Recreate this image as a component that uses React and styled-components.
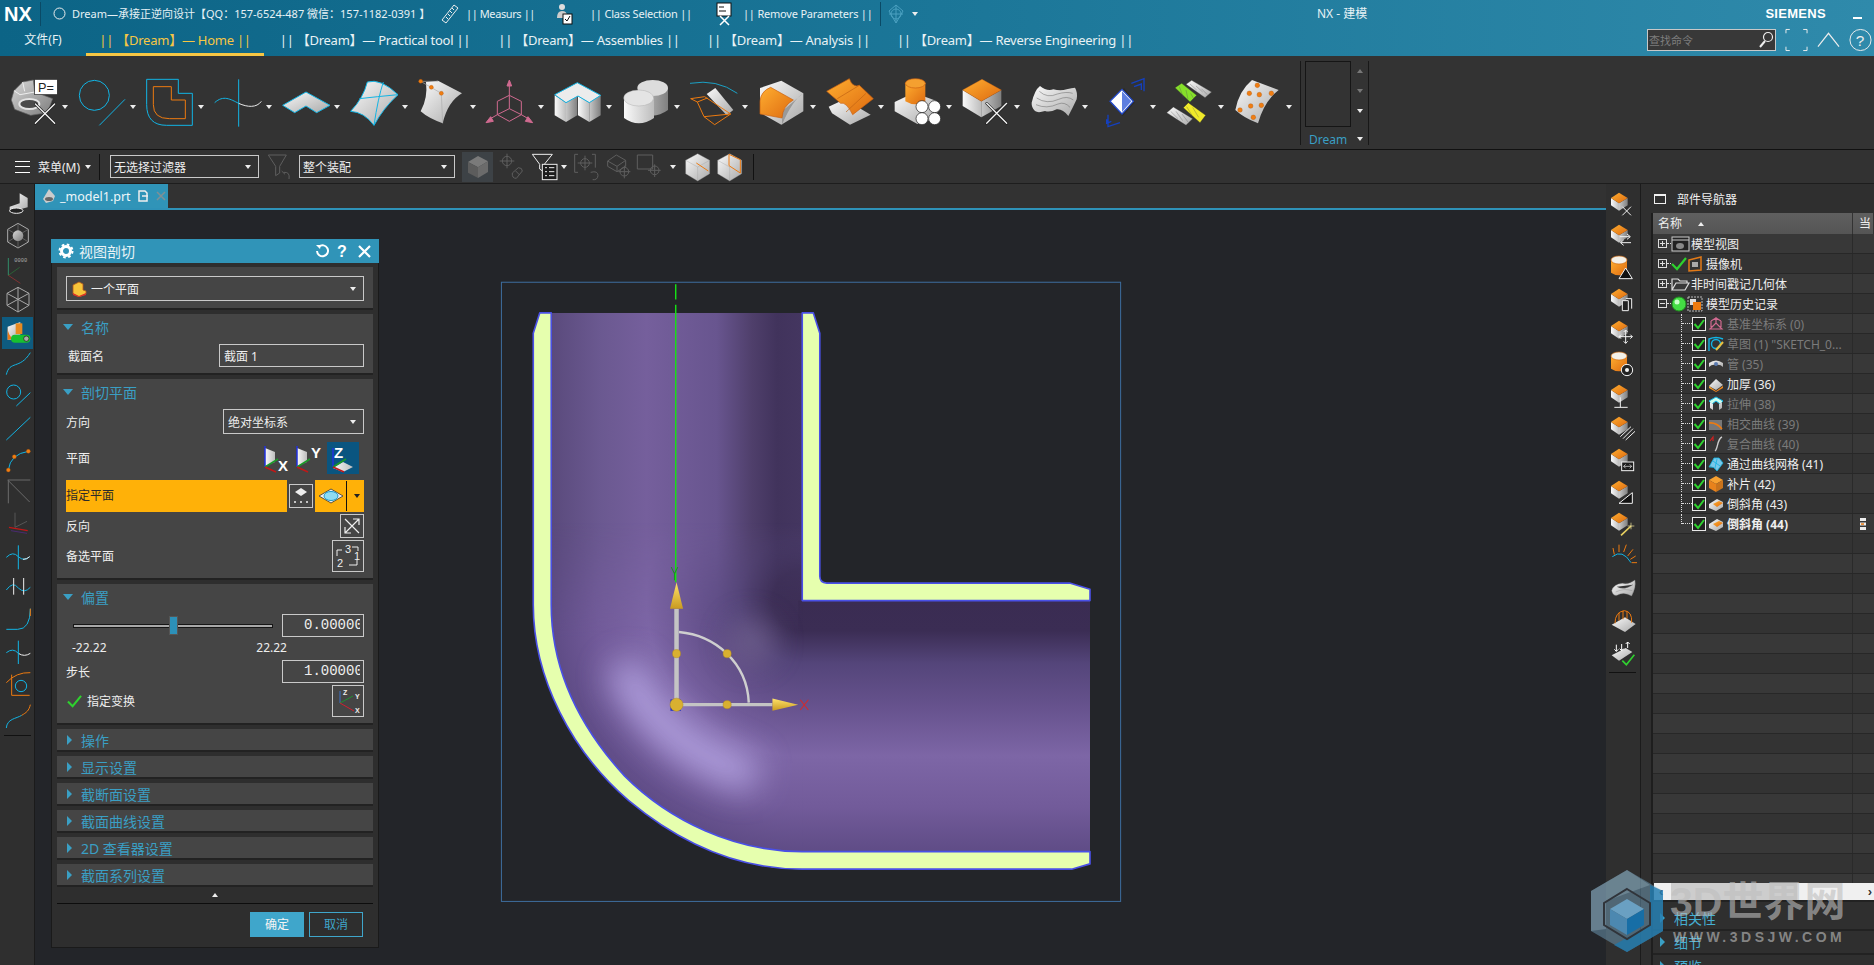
import React from 'react';
import styled, { createGlobalStyle } from 'styled-components';

const FONT = `"Noto Sans", "Noto Sans CJK SC", sans-serif`;
const BLUE = '#3a9fc4';

const Global = createGlobalStyle`
  html, body { margin: 0; padding: 0; background: #232529; }
  body { font-family: ${FONT}; font-size: 12px; color: #eee; }
  * { box-sizing: border-box; }
`;

const Page = styled.div`
  width: 1874px;
  height: 965px;
  overflow: hidden;
  position: relative;
  display: flex;
  flex-direction: column;
  background: #232529;
`;

/* ---------- title + tabs ---------- */
const Head = styled.div`
  height: 56px;
  flex: none;
  background: linear-gradient(90deg, #0c6486 0%, #1b7698 50%, #2f8aab 100%);
`;
const TitleBar = styled.div`
  height: 27px;
  display: flex;
  align-items: center;
  padding: 0 12px 0 4px;
`;
const Logo = styled.div`
  width: 37px;
  height: 24px;
  font: 700 20px/24px "Liberation Sans", sans-serif;
  color: #fff;
  border-right: 1px solid #0a4a66;
`;
const TitleText = styled.span`
  font-size: ${p => p.$fs || 11}px;
  line-height: 16px;
  letter-spacing: ${p => p.$ls || 0}px;
  white-space: nowrap;
  color: #e6f1f5;
  margin-left: ${p => p.$ml || 0}px;
  width: ${p => (p.$w ? p.$w + 'px' : 'auto')};
  flex: none;
`;
const TitleSep = styled.div`
  width: 1px;
  height: 24px;
  background: #0a4a66;
  flex: none;
  margin-left: ${p => p.$ml || 0}px;
`;
const Siemens = styled.div`
  margin-left: auto;
  font: 700 13px/16px "Liberation Sans", sans-serif;
  letter-spacing: .3px;
  color: #fff;
`;
const MinBtn = styled.div`
  width: 9px;
  height: 2px;
  background: #fff;
  margin: 8px 0 0 27px;
`;
const TabsBar = styled.div`
  height: 29px;
  display: flex;
  align-items: stretch;
  padding-right: 2px;
`;
const Tab = styled.div`
  width: ${p => p.$w}px;
  flex: none;
  display: flex;
  justify-content: center;
  align-items: center;
  padding-bottom: 2px;
  font-size: ${p => (p.$plain ? 12 : 13)}px;
  letter-spacing: ${p => (p.$plain ? 0 : -0.25)}px;
  white-space: nowrap;
  color: ${p => (p.$on ? '#f6c644' : '#e8f2f5')};
  border-bottom: 3px solid ${p => (p.$on ? '#f6c644' : 'transparent')};
`;
const Search = styled.div`
  margin-left: auto;
  width: 129px;
  height: 22px;
  margin-top: 2px;
  border: 1px solid #c8c8c8;
  background: #383838;
  color: #7d7d7d;
  font-size: 11px;
  line-height: 19px;
  padding-left: 1px;
  display: flex;
  justify-content: space-between;
  align-items: center;
`;
const HeadIcons = styled.div`
  display: flex;
  align-items: center;
  gap: 9px;
  padding: 0 0 4px 9px;
  width: 96px;
`;

/* ---------- ribbon ---------- */
const Ribbon = styled.div`
  height: 94px;
  flex: none;
  background: #333;
  border-bottom: 1px solid #111;
  display: flex;
  padding-left: 10px;
`;
const RibbonItem = styled.div`
  width: 68px;
  flex: none;
  padding-top: 22px;
  display: flex;
  align-items: flex-start;
`;
const RibbonIcon = styled.svg`
  width: 48px;
  height: 48px;
  flex: none;
  overflow: visible;
`;
const Caret = styled.span`
  flex: none;
  width: 0;
  height: 0;
  border-left: 3px solid transparent;
  border-right: 3px solid transparent;
  border-top: 4px solid ${p => p.$c || '#eee'};
  margin: ${p => p.$m || '0'};
`;
const Gallery = styled.div`
  margin: 5px 0 0 -2px;
  width: 69px;
  height: 84px;
  border-left: 1px solid #181818;
  border-right: 1px solid #181818;
  padding-left: 4px;
  display: grid;
  grid-template-columns: 46px 1fr;
  grid-template-rows: 66px 1fr;
`;
const GalleryBox = styled.div`
  border: 1px solid #151515;
`;
const GalleryArrows = styled.div`
  display: flex;
  flex-direction: column;
  align-items: center;
  gap: 16px;
  padding: ${p => p.$p || '8px 0 0 0'};
`;
const GalleryName = styled.div`
  color: ${BLUE};
  font-size: 12px;
  line-height: 17px;
  padding: 4px 0 0 4px;
`;
const Arrow = styled.span`
  width: 0;
  height: 0;
  flex: none;
  margin-left: ${p => p.$ml || 0}px;
  border-left: 3px solid transparent;
  border-right: 3px solid transparent;
  ${p => (p.$up ? `border-bottom: 4px solid ${p.$c}` : `border-top: 4px solid ${p.$c}`)};
`;

/* ---------- selection toolbar ---------- */
const Toolbar = styled.div`
  height: 34px;
  flex: none;
  background: #323232;
  border-bottom: 1px solid #1d1d1d;
  display: flex;
  align-items: center;
`;
const MenuLines = styled.div`
  width: 15px;
  height: 12px;
  margin-left: 15px;
  border-top: 1px solid #fff;
  border-bottom: 1px solid #fff;
  position: relative;
  &::after { content: ''; position: absolute; left: 0; right: 0; top: 4px; height: 1px; background: #fff; }
`;
const MenuText = styled.span`
  font-size: 12px;
  margin: 0 5px 0 8px;
  white-space: nowrap;
`;
const VSep = styled.div`
  width: 1px;
  height: 26px;
  background: #111;
  flex: none;
  margin: ${p => p.$m || '0'};
`;
const Combo = styled.div`
  width: ${p => p.$w}px;
  height: ${p => p.$h || 23}px;
  flex: none;
  margin-left: ${p => p.$ml || 0}px;
  border: 1px solid #c9c9c9;
  display: flex;
  align-items: center;
  justify-content: space-between;
  padding: 0 7px 0 ${p => p.$pl || 3}px;
  font-size: 12px;
  color: #eee;
  white-space: nowrap;
`;
const ComboLead = styled.span`
  display: flex;
  align-items: center;
  gap: 4px;
`;
const ToolIcon = styled.svg`
  width: ${p => p.$w || 28}px;
  height: 28px;
  flex: none;
  margin-left: ${p => p.$ml || 0}px;
  overflow: visible;
`;
const ToolActive = styled.div`
  width: 31px;
  height: 30px;
  flex: none;
  margin-left: 7px;
  background: #3d4246;
  display: flex;
  align-items: center;
  justify-content: center;
`;

/* ---------- body ---------- */
const Body = styled.div`
  flex: 1;
  min-height: 0;
  display: flex;
`;
const Strip = styled.div`
  width: 35px;
  flex: none;
  background: #2f2f2f;
  border-right: 1px solid #1b1b1b;
  padding: 5px 0 0 2px;
  display: flex;
  flex-direction: column;
`;
const Cell = styled.div`
  width: 31px;
  height: 32px;
  flex: none;
  display: flex;
  align-items: center;
  justify-content: center;
  background: ${p => (p.$on ? '#0e5b80' : 'transparent')};
`;
const CellIcon = styled.svg`
  width: 30px;
  height: 30px;
  overflow: visible;
`;
const StripLine = styled.div`
  height: 1px;
  width: 27px;
  margin: ${p => p.$m || '2px 0 0 2px'};
  background: #111;
`;
const Center = styled.div`
  flex: 1;
  min-width: 0;
  display: flex;
  flex-direction: column;
`;
const DocTabs = styled.div`
  height: 26px;
  flex: none;
  background: #323232;
  border-bottom: 2px solid #2e92b8;
`;
const DocTab = styled.div`
  width: 133px;
  height: 24px;
  background: #3094b8;
  display: flex;
  align-items: center;
  padding-left: 6px;
  font-size: 12.5px;
  color: #eef6f8;
  gap: 3px;
`;
const Viewport = styled.div`
  flex: 1;
  position: relative;
  background: #232529;
`;
const ModelSvg = styled.svg`
  position: absolute;
  left: 455px;
  top: 60px;
  width: 640px;
  height: 640px;
`;

/* ---------- dialog ---------- */
const Dialog = styled.div`
  position: absolute;
  left: 16px;
  top: 29px;
  width: 328px;
  height: 709px;
  background: #2e2e2e;
  border: 1px solid #1a1a1a;
  border-top: 0;
  display: flex;
  flex-direction: column;
`;
const DialogHead = styled.div`
  height: 24px;
  margin: 0 -1px;
  flex: none;
  background: #3094b8;
  display: flex;
  align-items: center;
  padding: 0 8px 0 7px;
  font-size: 14px;
  color: #e8f3f6;
`;
const DialogTitle = styled.span`
  margin-left: 5px;
  flex: 1;
`;
const Sections = styled.div`
  padding: 4px 5px 0;
  display: flex;
  flex-direction: column;
  gap: 4px;
`;
const Section = styled.div`
  background: #454545;
  border-bottom: 2px solid #222;
  padding: ${p => p.$p || '0 9px 6px'};
  height: ${p => (p.$h ? p.$h + 'px' : 'auto')};
  display: flex;
  flex-direction: column;
`;
const SecHead = styled.div`
  height: 30px;
  padding-bottom: 4px;
  margin-left: -3px;
  display: flex;
  align-items: center;
  font-size: 14px;
  color: ${BLUE};
  flex: none;
`;
const OpenArrow = styled.span`
  width: 0;
  height: 0;
  margin-right: 8px;
  border-left: 5px solid transparent;
  border-right: 5px solid transparent;
  border-top: 6px solid ${BLUE};
`;
const ClosedArrow = styled.span`
  width: 0;
  height: 0;
  margin-right: 9px;
  border-top: 5px solid transparent;
  border-bottom: 5px solid transparent;
  border-left: 5px solid ${BLUE};
`;
const FieldRow = styled.div`
  height: ${p => p.$h}px;
  flex: none;
  margin-top: ${p => p.$mt || 0}px;
  display: flex;
  align-items: center;
  justify-content: space-between;
  font-size: 12px;
  color: #eee;
`;
const FieldLabel = styled.span`
  padding-left: ${p => p.$pl || 0}px;
`;
const PlaneIcons = styled.div`
  display: flex;
  align-items: center;
  padding-right: 5px;
`;
const PlaneBtn = styled.div`
  width: 32px;
  height: 32px;
  background: ${p => (p.$on ? '#0a5580' : 'transparent')};
`;
const Required = styled.div`
  width: 221px;
  height: 32px;
  background: #ffb108;
  color: #2a2a2a;
  line-height: 32px;
`;
const SquareBtn = styled.div`
  width: ${p => p.$s}px;
  height: ${p => p.$h || p.$s}px;
  flex: none;
  border: 1px solid #c9c9c9;
  display: flex;
  align-items: center;
  justify-content: center;
`;
const OrangeSplit = styled.div`
  width: 49px;
  height: 32px;
  flex: none;
  background: #ffb108;
  display: flex;
  align-items: center;
  padding-left: 4px;
`;
const OrangeLine = styled.div`
  width: 1px;
  height: 30px;
  background: #111;
  margin: 0 7px 0 3px;
`;
const SlideTrack = styled.div`
  position: relative;
  width: 200px;
  height: 4px;
  margin-left: 7px;
  background: #a8a8a8;
  border: 1px solid #161616;
`;
const SlideThumb = styled.div`
  position: absolute;
  left: 95px;
  top: -9px;
  width: 9px;
  height: 19px;
  background: #2c90b8;
  border: 1px solid #555;
`;
const NumBox = styled.div`
  width: 82px;
  height: 23px;
  flex: none;
  border: 1px solid #c9c9c9;
  padding-left: 21px;
  font: 14px/21px "Liberation Mono", monospace;
  color: #eee;
`;
const NumClip = styled.div`
  width: 56px;
  overflow: hidden;
  white-space: nowrap;
`;
const Bound = styled.div`
  height: 16px;
  width: 215px;
  margin: 3px 0 4px 6px;
  flex: none;
  display: flex;
  justify-content: space-between;
  font-size: 12px;
  line-height: 16px;
  color: #eee;
`;
const CheckLabel = styled.span`
  display: flex;
  align-items: center;
  gap: 5px;
  padding-left: 1px;
`;
const Collapsed = styled.div`
  height: 23px;
  background: #454545;
  border-bottom: 2px solid #222;
  display: flex;
  align-items: center;
  padding-left: 10px;
  font-size: 14px;
  color: ${BLUE};
`;
const MoreRow = styled.div`
  height: 17px;
  margin: 0 5px;
  flex: none;
  border-bottom: 1px solid #0d0d0d;
  display: flex;
  align-items: center;
  justify-content: center;
`;
const DialogFoot = styled.div`
  display: flex;
  justify-content: flex-end;
  gap: 5px;
  padding: 8px 15px 0 0;
`;
const DlgBtn = styled.div`
  width: 54px;
  height: 25px;
  font-size: 12px;
  line-height: 23px;
  text-align: center;
  border: 1px solid #3fa6cb;
  background: ${p => (p.$ok ? '#3fa6cb' : 'transparent')};
  color: ${p => (p.$ok ? '#f4f4f4' : '#3fa6cb')};
`;

/* ---------- navigator ---------- */
const Nav = styled.div`
  width: 233px;
  flex: none;
  background: #2f2f2f;
  display: flex;
  flex-direction: column;
`;
const NavHead = styled.div`
  height: 29px;
  flex: none;
  display: flex;
  align-items: center;
  padding-left: 13px;
  font-size: 12px;
  color: #eee;
`;
const NavBox = styled.div`
  width: 12px;
  height: 10px;
  border: 1px solid #f0f0f0;
  border-top-width: 2px;
  margin-right: 11px;
`;
const Tree = styled.div`
  height: ${p => (p.$h ? p.$h + 'px' : 'auto')};
  flex: none;
  margin-left: 10px;
  border-left: 2px solid #1e1e1e;
  overflow: hidden;
  display: flex;
  flex-direction: column;
`;
const TreeHead = styled.div`
  height: 21px;
  flex: none;
  display: grid;
  grid-template-columns: 200px 1fr;
  background: linear-gradient(#5f5f5f, #555);
  color: #eee;
  line-height: 21px;
`;
const TreeHeadCell = styled.div`
  padding-left: ${p => p.$pl}px;
  border-right: 1px solid #333;
  display: flex;
  align-items: center;
  gap: 16px;
`;
const Row = styled.div`
  height: 20px;
  flex: none;
  display: grid;
  grid-template-columns: 200px 1fr;
  border-bottom: 1px solid #272727;
  background: ${p => (p.$alt ? '#383838' : '#333')};
`;
const RowMain = styled.div`
  display: flex;
  align-items: center;
  padding-left: ${p => p.$pl || 0}px;
  border-right: 1px solid #2a2a2a;
  position: relative;
  white-space: nowrap;
  overflow: hidden;
`;
const RowSide = styled.div`
  display: flex;
  align-items: center;
  padding-left: 7px;
`;
const RowText = styled.span`
  font-size: 12px;
  color: ${p => (p.$dim ? '#7b7b7b' : '#eee')};
  font-weight: ${p => (p.$bold ? 700 : 400)};
  margin-left: ${p => p.$ml || 0}px;
`;
const Expander = styled.span`
  width: 9px;
  height: 9px;
  flex: none;
  border: 1px solid #ddd;
  position: relative;
  &::before { content: ''; position: absolute; left: 1px; right: 1px; top: 3px; height: 1px; background: #ddd; }
  ${p => p.$plus && `&::after { content: ''; position: absolute; top: 1px; bottom: 1px; left: 3px; width: 1px; background: #ddd; }`}
`;
const Stub = styled.span`
  width: 4px;
  flex: none;
  border-top: 1px dotted #ddd;
`;
const Branch = styled.span`
  width: 11px;
  flex: none;
  margin-left: 28px;
  position: relative;
  border-left: 1px dotted #ddd;
  height: ${p => (p.$last ? '10px' : '20px')};
  align-self: flex-start;
  &::after { content: ''; position: absolute; left: 0; right: 0; top: 9px; border-top: 1px dotted #ddd; }
`;
const TreeIcon = styled.svg`
  width: ${p => p.$w || 16}px;
  height: 16px;
  flex: none;
  margin-left: ${p => p.$ml || 0}px;
  overflow: visible;
`;
const Scroller = styled.div`
  height: 17px;
  flex: none;
  background: #f0f0f0;
  margin: 0 0 0 1px;
  display: flex;
  align-items: center;
  justify-content: space-between;
  padding: 0 2px 0 5px;
  position: relative;
  color: #333;
  font: 700 13px/15px "Liberation Sans", sans-serif;
`;
const ScrollThumb = styled.div`
  position: absolute;
  left: 17px;
  width: 126px;
  top: 0;
  bottom: 0;
  background: #cdcdcd;
`;
const ScrollEnd = styled.span`
  position: relative;
`;
const Accordion = styled.div`
  margin-left: 10px;
  border-left: 2px solid #1e1e1e;
  border-top: 2px solid #222;
  padding-top: 5px;
  flex: 1;
`;
const AccRow = styled.div`
  height: 24px;
  display: flex;
  align-items: center;
  padding-left: 7px;
  font-size: 14px;
  color: #45aed2;
  border-bottom: 2px solid #222;
`;
const Mark = styled.div`
  position: absolute;
  left: 1590px;
  top: 869px;
  width: 270px;
  height: 86px;
  pointer-events: none;
`;
const MarkIcon = styled.svg`
  position: absolute;
  left: 0;
  top: 0;
  width: 74px;
  height: 84px;
`;
const MarkName = styled.div`
  position: absolute;
  left: 80px;
  top: 10px;
  font: 700 41px/46px "Liberation Sans", "Noto Sans CJK SC", sans-serif;
  color: rgba(190, 190, 190, .62);
  white-space: nowrap;
`;
const MarkUrl = styled.div`
  position: absolute;
  left: 83px;
  top: 60px;
  font: 700 14px/16px "Liberation Sans", sans-serif;
  letter-spacing: 3.5px;
  color: rgba(190, 190, 190, .62);
  white-space: nowrap;
`;

/* ---------- icon pieces ---------- */
const Defs = () => (
  <svg width="0" height="0" style={{ position: 'absolute' }}>
    <defs>
      <linearGradient id="gW" x1="0" y1="0" x2="1" y2="1"><stop offset="0" stopColor="#fbfbfb" /><stop offset="1" stopColor="#a9a9a9" /></linearGradient>
      <linearGradient id="gS" x1="0" y1="0" x2="1" y2="1"><stop offset="0" stopColor="#d8d8d8" /><stop offset="1" stopColor="#7c7c7c" /></linearGradient>
      <linearGradient id="gL" x1="0" y1="0" x2="1" y2="0"><stop offset="0" stopColor="#fafafa" /><stop offset="1" stopColor="#bdbdbd" /></linearGradient>
      <linearGradient id="gR" x1="0" y1="0" x2="1" y2="0"><stop offset="0" stopColor="#c8c8c8" /><stop offset="1" stopColor="#808080" /></linearGradient>
      <linearGradient id="gO" x1="0" y1="0" x2="1" y2="1"><stop offset="0" stopColor="#ffae30" /><stop offset="1" stopColor="#dd6a10" /></linearGradient>
      <linearGradient id="gV" x1="0" y1="0" x2="0" y2="1"><stop offset="0" stopColor="#ffe36a" /><stop offset="1" stopColor="#c99a20" /></linearGradient>
      <linearGradient id="mV" gradientUnits="userSpaceOnUse" x1="150" y1="0" x2="765" y2="0">
        <stop offset="0" stopColor="#5a4a7c" /><stop offset=".2" stopColor="#6b5991" /><stop offset=".38" stopColor="#755f9c" />
        <stop offset=".66" stopColor="#68558f" /><stop offset=".8" stopColor="#4f3f6b" /><stop offset=".9" stopColor="#41335c" /><stop offset="1" stopColor="#443660" />
      </linearGradient>
      <linearGradient id="mH" gradientUnits="userSpaceOnUse" x1="0" y1="810" x2="0" y2="1425">
        <stop offset="0" stopColor="#3a2c52" /><stop offset=".12" stopColor="#3b2d54" /><stop offset=".25" stopColor="#54457a" />
        <stop offset=".42" stopColor="#66528d" /><stop offset=".62" stopColor="#7d66a6" /><stop offset=".82" stopColor="#725b9a" /><stop offset="1" stopColor="#5f4c86" />
      </linearGradient>
      <radialGradient id="mE" gradientUnits="userSpaceOnUse" cx="765" cy="810" r="615">
        <stop offset="0" stopColor="#3a2c52" /><stop offset=".12" stopColor="#3b2d54" /><stop offset=".25" stopColor="#54457a" />
        <stop offset=".42" stopColor="#66528d" /><stop offset=".62" stopColor="#7d66a6" /><stop offset=".82" stopColor="#725b9a" /><stop offset="1" stopColor="#5f4c86" />
      </radialGradient>
      <linearGradient id="mFade" gradientUnits="userSpaceOnUse" x1="0" y1="620" x2="0" y2="900">
        <stop offset="0" stopColor="#000" /><stop offset="1" stopColor="#fff" />
      </linearGradient>
      <mask id="elbowMask" maskUnits="userSpaceOnUse" x="100" y="500" width="700" height="1000">
        <rect x="100" y="500" width="700" height="1000" fill="url(#mFade)" />
      </mask>
      <filter id="blurA" x="-60%" y="-60%" width="220%" height="220%"><feGaussianBlur stdDeviation="42" /></filter>
      <filter id="blurB" x="-60%" y="-60%" width="220%" height="220%"><feGaussianBlur stdDeviation="34" /></filter>
    </defs>
  </svg>
);

const Cross = ({ x, y, s }) => (
  <g strokeLinecap="round">
    <path d={`M${x} ${y}L${x + s} ${y + s}M${x + s} ${y}L${x} ${y + s}`} stroke="#1c1c1c" strokeWidth="8" />
    <path d={`M${x} ${y}L${x + s} ${y + s}M${x + s} ${y}L${x} ${y + s}`} stroke="#f4f4f4" strokeWidth="4" fill="none" />
  </g>
);
const Dot = ({ x, y, r = 6 }) => <circle cx={x} cy={y} r={r} fill="#f07d12" stroke="#a85208" strokeWidth="1" />;
const CY = '#12b4e4';
const OR = '#ec7a10';

const ribbonIcons = [
  <g key="a">
    <path d="M4 66L12 38L38 12L70 6L74 42L128 62L112 104L62 112L14 94Z" fill="url(#gS)" stroke="#666" strokeWidth="2" />
    <path d="M12 38L30 50L74 42M38 12L44 40" stroke="#eee" strokeWidth="3" fill="none" />
    <ellipse cx="58" cy="78" rx="30" ry="15" fill="#4c4c4c" stroke="#e4e4e4" strokeWidth="6" />
    <rect x="74" y="4" width="68" height="46" fill="#fff" stroke="#222" strokeWidth="2" />
    <text x="84" y="42" fontFamily="Liberation Sans" fontSize="38" fill="#222">P=</text>
    <Cross x={76} y={78} s={58} />
  </g>,
  <g key="b" fill="none" stroke={CY} strokeWidth="3">
    <circle cx="49" cy="52" r="45" /><path d="M141 64L64 142" />
  </g>,
  <g key="c" fill="none" strokeWidth="3">
    <path d="M2 4H97V46H139V142H62Q2 142 2 80Z" stroke={CY} />
    <path d="M22 26H76V66H118V122H70Q22 122 22 80Z" stroke={OR} />
  </g>,
  <g key="d" fill="none" strokeWidth="3">
    <path d="M74 4V146" stroke={CY} />
    <path d="M2 74C28 50 50 64 74 76" stroke={CY} />
    <path d="M74 76C100 88 128 90 142 70" stroke="#e8e8e8" />
  </g>,
  <path key="e" d="M2 82L72 42L144 82L104 104L72 84L38 104Z" fill="url(#gW)" stroke={CY} strokeWidth="3" />,
  <g key="f">
    <path d="M2 100Q40 60 52 12Q92 0 144 50Q100 90 72 142Q42 102 2 100Z" fill="url(#gW)" stroke={CY} strokeWidth="3" />
    <path d="M28 62Q80 56 144 50M100 12Q84 60 72 142" fill="none" stroke={CY} strokeWidth="3" />
  </g>,
  <g key="g">
    <path d="M60 8L132 46Q90 70 74 136Q30 120 8 100Q30 60 24 12Z" fill="url(#gW)" />
    <path d="M8 10L70 46L74 136M8 10H60" stroke="#aaa" strokeWidth="2" fill="none" />
    <Dot x={8} y={10} /><Dot x={40} y={28} /><Dot x={70} y={46} />
  </g>,
  <g key="h" fill="none" stroke="#d06a90" strokeWidth="3">
    <path d="M70 52L106 70V110L70 130L34 110V70ZM70 92V52M70 92L34 110M70 92L106 110M70 52V20M34 110L10 124M106 110L130 124" />
    <path d="M70 6L77 24H63Z" fill="#d06a90" /><path d="M0 134L14 116L22 130Z" fill="#d06a90" /><path d="M140 134L118 130L126 116Z" fill="#d06a90" />
  </g>,
  <g key="i">
    <path d="M2 52L36 74V132L2 112Z" fill="url(#gL)" /><path d="M36 74L70 54V112L36 132Z" fill="url(#gR)" />
    <path d="M72 54L106 74V132L72 112Z" fill="url(#gL)" /><path d="M106 74L140 52V112L106 132Z" fill="url(#gR)" />
    <path d="M2 50L70 14L140 52L106 74L72 54L36 74Z" fill="#ececec" stroke={CY} strokeWidth="3" />
  </g>,
  <g key="j">
    <path d="M48 30V96Q90 130 138 96V30Z" fill="url(#gR)" /><ellipse cx="92" cy="30" rx="46" ry="24" fill="#dcdcdc" />
    <path d="M6 60V120Q50 152 96 120V60Z" fill="url(#gL)" /><ellipse cx="50" cy="60" rx="45" ry="24" fill="#e4e4e4" stroke="#999" strokeWidth="1" />
  </g>,
  <g key="k">
    <path d="M0 16Q80 2 142 46" fill="none" stroke="#1ba0c4" strokeWidth="3" />
    <path d="M50 48L76 30L130 96L110 112Z" fill="url(#gW)" />
    <path d="M2 62L44 56L122 108L74 140L42 116L22 72ZM22 72L52 60M42 116L122 108" fill="none" stroke={OR} strokeWidth="3" />
  </g>,
  <g key="l">
    <path d="M70 8L136 46V100L70 140L6 104V30Z" fill="url(#gW)" />
    <path d="M136 46Q104 66 72 140V100" fill="#999" /><path d="M6 108V70Q8 40 38 28L106 66Q74 84 72 120Z" fill="url(#gO)" stroke="#c85f10" strokeWidth="2" />
  </g>,
  <g key="m">
    <path d="M8 86L56 64L134 110L72 140L18 106Z" fill="url(#gW)" />
    <path d="M2 40L70 2Q80 30 100 22L142 62L80 110Q60 70 44 76Z" fill="url(#gO)" stroke="#c85f10" strokeWidth="2" />
    <path d="M34 62L100 22M60 102L120 46" stroke="#c06010" strokeWidth="2" fill="none" />
  </g>,
  <g key="n">
    <path d="M2 72L60 44L130 70V120L70 138L2 100Z" fill="url(#gW)" />
    <path d="M34 14V70Q64 88 94 70V14Z" fill="url(#gO)" /><ellipse cx="64" cy="16" rx="30" ry="14" fill="#f4a030" stroke="#c85f10" strokeWidth="2" />
    <g fill="#fff" stroke="#1c1c1c" strokeWidth="2"><circle cx="84" cy="86" r="18" /><circle cx="122" cy="86" r="18" /><circle cx="84" cy="122" r="18" /><circle cx="122" cy="122" r="18" /></g>
  </g>,
  <g key="o">
    <path d="M2 36L58 70V118L2 84Z" fill="url(#gL)" /><path d="M58 70L118 36V84L58 118Z" fill="url(#gR)" />
    <path d="M60 4L118 36L58 70L2 36Z" fill="url(#gO)" stroke="#c85f10" strokeWidth="1" />
    <Cross x={74} y={76} s={60} />
  </g>,
  <g key="p">
    <path d="M5 74Q14 36 30 24Q50 40 70 34Q92 40 110 34Q126 30 135 29Q144 44 140 64Q128 90 115 114Q98 92 80 94Q60 104 45 99Q24 106 15 99Q4 88 5 74Z" fill="url(#gW)" />
    <path d="M28 40Q52 62 82 48Q110 40 128 46M20 60Q50 80 86 64Q112 52 130 66M18 80Q50 94 84 78Q104 70 120 88" stroke="#6c6c6c" fill="none" strokeWidth="1.6" />
  </g>,
  <g key="q">
    <path d="M100 16L138 2V40M108 26L130 18V36M30 110V146L66 134M26 124V136L40 130" fill="none" stroke="#1440c0" strokeWidth="4" />
    <path d="M78 30L110 74L74 114L36 72Z" fill="#2a2a2a" />
    <path d="M72 34L106 70L72 108L36 70Z" fill="#fff" stroke="#2148c8" strokeWidth="4" /><path d="M72 40L100 70L72 102Z" fill="#5d7ee0" />
  </g>,
  <g key="r" stroke="#2a2a2a" strokeWidth="1">
    <path d="M27 29L47 16L92 52L72 72Z" fill="#86e02a" /><path d="M60 19L77 7L137 42L117 59Z" fill="url(#gW)" />
    <path d="M52 89L67 74L119 112L102 134Z" fill="#f0ea2a" /><path d="M2 104L22 87L80 122L60 142Z" fill="url(#gW)" />
    <path d="M40 26L52 58M60 36L66 64M74 46L82 60M72 18L92 36M90 24L110 42M106 32L124 50M62 86L78 112M80 88L98 118M14 100L36 122M30 100L50 128M48 108L66 132" stroke="#555" fill="none" />
  </g>,
  <g key="s">
    <path d="M54 6L134 36Q90 70 72 136Q30 120 4 96Q14 40 54 6Z" fill="url(#gW)" />
    <Dot x={70} y={22} r={7} /><Dot x={46} y={46} r={7} /><Dot x={76} y={50} r={7} /><Dot x={112} y={46} r={7} />
    <Dot x={18} y={96} r={7} /><Dot x={50} y={84} r={7} /><Dot x={82} y={82} r={7} /><Dot x={58} y={118} r={7} />
  </g>,
];

const OCube = () => (
  <g>
    <path d="M6 24L30 40V62L6 46Z" fill="url(#gL)" /><path d="M30 40L56 24V46L30 62Z" fill="url(#gR)" />
    <path d="M30 8L56 24L30 40L6 24Z" fill="url(#gO)" />
  </g>
);
const OCyl = () => (
  <g>
    <path d="M6 18V56Q30 72 54 56V18Z" fill="url(#gO)" /><ellipse cx="30" cy="18" rx="24" ry="12" fill="#f3f0e8" stroke="#d06a10" strokeWidth="2" />
  </g>
);
const W = { fill: 'none', stroke: '#f2f2f2', strokeWidth: 3 };
const rightIcons = [
  <g key="1"><OCube /><path d="M40 50L66 76M66 50L40 76" {...W} /></g>,
  <g key="2"><OCube /><path d="M32 44H62M54 36L64 44L54 52M66 62H36M44 54L34 62L44 70" {...W} /></g>,
  <g key="3"><OCyl /><path d="M50 42L70 74H30Z" fill="#111" stroke="#f2f2f2" strokeWidth="3" /></g>,
  <g key="4"><OCube /><path d="M40 44H58V74H40ZM50 38H68V68" fill="#222" stroke="#f2f2f2" strokeWidth="3" /></g>,
  <g key="5"><OCube /><path d="M50 36V76M30 56H70M44 42L50 36L56 42M44 70L50 76L56 70M36 50L30 56L36 62M64 50L70 56L64 62" {...W} /></g>,
  <g key="6"><OCyl /><circle cx="54" cy="60" r="17" fill="#222" stroke="#f2f2f2" strokeWidth="3" /><circle cx="54" cy="60" r="6" fill="#f2f2f2" /></g>,
  <g key="7"><OCube /><path d="M34 46V76M16 76H56" {...W} /></g>,
  <g key="8"><OCube /><path d="M34 68L66 38M42 74L72 44M50 78L78 52" {...W} /></g>,
  <g key="9"><OCube /><rect x="38" y="48" width="36" height="26" fill="#1c1c1c" stroke="#f2f2f2" strokeWidth="3" /><path d="M44 61H68M50 55L44 61L50 67M62 55L68 61L62 67" stroke="#f2f2f2" strokeWidth="2" fill="none" /></g>,
  <g key="10"><OCube /><path d="M30 76L70 44V76Z" fill="#111" stroke="#f2f2f2" strokeWidth="3" /></g>,
  <g key="11"><OCube /><path d="M36 76L66 48" stroke="#e8d060" strokeWidth="5" /><path d="M66 38V58M56 48H76" stroke="#f4e8a0" strokeWidth="2" /></g>,
  <g key="12" fill="none"><path d="M10 44Q40 20 66 62" stroke={CY} strokeWidth="3" /><path d="M16 38L12 18M30 30V8M44 30L52 8M56 42L72 22M64 52L80 42M68 62H84" stroke={OR} strokeWidth="3" /></g>,
  <path key="13" d="M8 50Q14 30 40 28Q60 32 78 18Q82 40 68 66Q44 52 24 64Q12 66 8 50ZM24 38Q44 50 72 32M20 54Q44 42 70 50" fill="url(#gW)" stroke="#777" strokeWidth="1" />,
  <g key="14"><path d="M8 56L48 34L80 54L48 78Z" fill="url(#gW)" /><path d="M18 52Q18 18 46 14Q70 16 68 50M30 44V20M42 40V14M54 38V16" fill="none" stroke={OR} strokeWidth="3" /></g>,
  <g key="15"><path d="M8 52L50 30L70 42L30 68Z" fill="url(#gW)" /><path d="M22 20V40M16 34L22 40L28 34M38 18V38M32 32L38 38L44 32M56 30V12M50 18L56 12L62 18" stroke="#fff" strokeWidth="3" fill="none" /><path d="M40 68L52 80L76 50" stroke="#30d030" strokeWidth="5" fill="none" /></g>,
];
const GY = '#6a6a6a';
const leftIcons = [
  <g key="1"><path d="M50 10L74 24V52L20 66L20 50L50 40Z" fill="url(#gW)" /><ellipse cx="40" cy="62" rx="20" ry="8" fill="#222" stroke="#eee" strokeWidth="3" /></g>,
  <g key="2"><path d="M45 4L76 22V60L45 78L14 60V22Z" fill="none" stroke="#aaa" strokeWidth="3" /><path d="M14 22L45 40L76 22M45 40V78M14 60L45 40L76 60M45 4V40" stroke="#777" strokeWidth="2" fill="none" /><circle cx="45" cy="41" r="16" fill="url(#gS)" /></g>,
  <g key="3" fill="none"><path d="M16 12V64" stroke="#3b8" strokeWidth="2" /><path d="M16 64L50 40" stroke="#287a3a" strokeWidth="2" /><path d="M16 64L52 88" stroke="#a33" strokeWidth="2" /><text x="34" y="24" fontSize="16" fill="#aaa" stroke="none" fontFamily="Liberation Mono">0000</text></g>,
  <g key="4" fill="none" stroke="#a8a8a8" strokeWidth="3"><path d="M45 4L78 22V58L45 78L12 58V22ZM12 22L45 40L78 22M45 40V78M12 58L45 40L78 58M45 4V40" /></g>,
  <g key="5"><path d="M14 26L52 12V62L14 66Z" fill="url(#gW)" /><path d="M14 26Q14 50 30 62L14 66Z" fill="#e87a18" /><path d="M38 16H58V48H38Z" fill="#e88a20" /><rect x="24" y="50" width="58" height="24" rx="12" fill="#18c030" /><circle cx="70" cy="62" r="8" fill="#aaa" stroke="#111" strokeWidth="2" /></g>,
  <path key="6" d="M10 74C20 30 50 60 82 8" fill="none" stroke={CY} strokeWidth="3" />,
  <g key="7" fill="none" stroke={CY} strokeWidth="3"><circle cx="32" cy="30" r="21" /><path d="M40 72L82 32" /></g>,
  <path key="8" d="M10 78L82 10" fill="none" stroke={CY} strokeWidth="3" />,
  <g key="9"><path d="M16 72Q22 24 76 16" fill="none" stroke={CY} strokeWidth="3" /><Dot x={16} y={72} /><Dot x={34} y={32} /><Dot x={76} y={16} /></g>,
  <path key="10" d="M14 6H82M16 6V76M16 8L80 72" fill="none" stroke={GY} strokeWidth="3" />,
  <g key="11" fill="none"><path d="M36 8V52M36 52L72 34" stroke={GY} strokeWidth="2" /><path d="M18 52L74 62" stroke="#c01818" strokeWidth="4" /><path d="M24 62L72 70" stroke="#4a2a70" strokeWidth="3" /></g>,
  <g key="12" fill="none"><path d="M10 46Q30 26 46 44Q64 60 80 44" stroke={CY} strokeWidth="3" /><path d="M46 10V82" stroke={CY} strokeWidth="3" /><path d="M60 52Q72 52 80 44" stroke="#eee" strokeWidth="3" /></g>,
  <g key="13" fill="none"><path d="M10 48Q30 20 46 42Q64 60 82 40" stroke={CY} strokeWidth="3" /><path d="M32 12V62M62 12V62" stroke="#eee" strokeWidth="3" /></g>,
  <g key="14" fill="none"><path d="M10 70H44Q82 70 82 8" stroke={CY} strokeWidth="3" /><path d="M82 8V30" stroke={OR} strokeWidth="3" /></g>,
  <g key="15" fill="none"><path d="M10 44Q30 28 46 46" stroke={CY} strokeWidth="3" /><path d="M46 46Q64 58 82 46" stroke="#eee" strokeWidth="3" /><path d="M46 8V78" stroke={CY} strokeWidth="3" /></g>,
  <g key="16" fill="none"><path d="M10 38Q40 6 82 8" stroke={OR} strokeWidth="3" /><path d="M26 14V76H80" stroke={OR} strokeWidth="3" /><circle cx="54" cy="48" r="17" stroke={CY} strokeWidth="3" /></g>,
  <g key="17" fill="none" strokeWidth="3"><path d="M10 78C12 50 40 50 56 40" stroke={CY} /><path d="M56 40C70 32 78 26 82 8" stroke={OR} /></g>,
];

const Check = () => (
  <path d="M1 8L6 13L15 2" fill="none" stroke="#2ed22e" strokeWidth="2.2" />
);
const TreeCheck = () => (
  <TreeIcon $w={14} viewBox="0 0 14 14">
    <rect x=".5" y=".5" width="13" height="13" fill="#222" stroke="#e8e8e8" />
    <path d="M2.5 7L6 11L12 3" fill="none" stroke="#2ed22e" strokeWidth="2" />
  </TreeIcon>
);
const treeIcons = {
  view: <g><rect x="1" y="1" width="17" height="14" fill="#222" stroke="#ccc" /><path d="M1 4H18" stroke="#ccc" /><ellipse cx="9" cy="10" rx="4" ry="3" fill="#888" /></g>,
  cam: <g><path d="M2 4L14 1V14L2 15Z" fill="none" stroke="#e27a18" strokeWidth="1.5" /><rect x="5" y="6" width="6" height="5" fill="#aaa" /></g>,
  folder: <path d="M1 14V3H7L9 5H16V7H5L1 14H14L18 7H16" fill="none" stroke="#ddd" strokeWidth="1.2" />,
  hist: <g><rect x="1" y="1" width="14" height="14" fill="none" stroke="#bbb" strokeDasharray="2 1" /><rect x="3" y="3" width="6" height="6" fill="#ddd" /><rect x="6" y="6" width="8" height="8" fill="#ec7a10" /></g>,
  datum: <path d="M8 1V7M8 7L2 13H14ZM3 5V11M13 5V11M3 5L8 2L13 5" fill="none" stroke="#d06a90" strokeWidth="1.2" />,
  sketch: <g fill="none"><circle cx="8" cy="8" r="4.5" stroke={CY} strokeWidth="1.4" /><path d="M1 15V3Q8 0 15 3" stroke={CY} strokeWidth="1.4" /><path d="M8 14L15 6" stroke="#e8c040" strokeWidth="2" /></g>,
  pipe: <g><path d="M1 7Q8 2 15 7V11Q12 8 8 9Q4 8 1 11Z" fill="url(#gW)" /><circle cx="8" cy="8" r="2" fill="#5a7ab0" /></g>,
  thick: <g><path d="M1 10L8 3L15 9L8 14Z" fill="url(#gW)" /><path d="M1 10L8 15L15 10V12L8 16L1 12Z" fill="url(#gO)" /></g>,
  extrude: <g><path d="M1 5L8 1L15 5L12 8L8 5L4 8Z" fill="#cfe" stroke={CY} /><path d="M2 6V12L5 14V8ZM11 8V14L14 12V6Z" fill="url(#gW)" /></g>,
  inter: <g><path d="M1 4H14V14H1Z" fill="#777" /><path d="M1 7Q8 6 14 13" stroke={OR} strokeWidth="1.5" fill="none" /></g>,
  comp: <g fill="none"><path d="M2 5L5 1V5" stroke="#d02020" strokeWidth="1.2" /><path d="M7 15C10 13 9 3 14 1" stroke="#ccc" strokeWidth="1.4" /></g>,
  mesh: <path d="M1 11L6 2H11L15 7L9 15Q6 10 1 11ZM5 5L12 10M9 3L7 12" fill="#79c8ea" stroke={CY} strokeWidth=".8" />,
  patch: <g><path d="M8 0L15 4L8 8L1 4Z" fill="#f7a030" /><path d="M1 4L8 8V16L1 12Z" fill="#e8821c" /><path d="M15 4L8 8V16L15 12Z" fill="#c9731c" /></g>,
  chamfer: <g><path d="M1 8L9 3L15 6L15 11L8 15L1 12Z" fill="url(#gW)" /><path d="M5 8L11 5L15 7L9 11Z" fill="url(#gO)" /></g>,
};
const rows = [
  { kind: 'top', exp: 'plus', icon: 'view', w: 20, text: '模型视图' },
  { kind: 'top', exp: 'plus', check: true, icon: 'cam', text: '摄像机' },
  { kind: 'top', exp: 'plus', icon: 'folder', w: 20, text: '非时间戳记几何体' },
  { kind: 'top', exp: 'minus', ball: true, icon: 'hist', text: '模型历史记录' },
  { icon: 'datum', text: '基准坐标系 (0)', dim: true },
  { icon: 'sketch', text: '草图 (1) "SKETCH_0...', dim: true },
  { icon: 'pipe', text: '管 (35)', dim: true },
  { icon: 'thick', text: '加厚 (36)' },
  { icon: 'extrude', text: '拉伸 (38)', dim: true },
  { icon: 'inter', text: '相交曲线 (39)', dim: true },
  { icon: 'comp', text: '复合曲线 (40)', dim: true },
  { icon: 'mesh', text: '通过曲线网格 (41)' },
  { icon: 'patch', text: '补片 (42)' },
  { icon: 'chamfer', text: '倒斜角 (43)' },
  { icon: 'chamfer', text: '倒斜角 (44)', bold: true, last: true },
];
const blankRows = Array.from({ length: 18 }, (_, i) => i);

const closedSections = ['操作', '显示设置', '截断面设置', '截面曲线设置', '2D 查看器设置', '截面系列设置'];
const tabs = [
  { w: 86, text: '文件(F)', plain: true },
  { w: 178, text: '|| 【Dream】— Home ||', on: true },
  { w: 222, text: '|| 【Dream】— Practical tool ||' },
  { w: 206, text: '|| 【Dream】— Assemblies ||' },
  { w: 193, text: '|| 【Dream】— Analysis ||' },
  { w: 260, text: '|| 【Dream】— Reverse Engineering ||' },
];

const PlaneGlyph = ({ letter }) => {
  const on = letter === 'Z';
  const labelAt = { X: [15, 29], Y: [16, 16], Z: [7, 16] }[letter];
  const dx = on ? 6 : 2;
  return (
    <svg width="32" height="32" viewBox="0 0 32 32">
      {on ? <path d={`M${dx} 26L${dx + 10} 20L${dx + 20} 25L${dx + 10} 30Z`} fill="url(#gL)" /> : <path d={`M${dx} 6L${dx + 10} 10V20L${dx} 24Z`} fill="url(#gL)" />}
      <path d={`M${dx} ${on ? 6 : 4}V25`} stroke="#2030e0" strokeWidth="1.5" />
      <path d={`M${dx} 25L${dx + 13} 17`} stroke="#1a9a28" strokeWidth="1.5" />
      <path d={`M${dx} 25L${dx + 11} 30`} stroke="#c01818" strokeWidth="1.5" />
      <text x={labelAt[0]} y={labelAt[1]} fontFamily="Liberation Sans" fontWeight="700" fontSize="15" fill="#fff">{letter}</text>
    </svg>
  );
};

const Model = () => (
  <ModelSvg viewBox="0 0 1568 1568">
    <defs>
      <clipPath id="bodyClip"><path d="M150 105H765V810H1470V1425H765C600 1425 440 1350 330 1240C220 1120 150 980 150 820Z" /></clipPath>
    </defs>
    <rect x="28" y="30" width="1517" height="1517" fill="none" stroke="#3d6c9c" strokeWidth="2.5" />
    <g clipPath="url(#bodyClip)">
      <rect x="150" y="105" width="615" height="800" fill="url(#mV)" />
      <rect x="755" y="810" width="715" height="615" fill="url(#mH)" />
      <rect x="100" y="500" width="665" height="1000" fill="url(#mE)" mask="url(#elbowMask)" />
      <path d="M325 965C370 1080 470 1190 650 1240" fill="none" stroke="#bcaceA" strokeWidth="84" opacity=".9" filter="url(#blurA)" />
      <ellipse cx="640" cy="910" rx="60" ry="60" fill="#75658f" opacity=".6" filter="url(#blurB)" />
    </g>
    <g fill="#e6ffae" stroke="#4a50e6" strokeWidth="4" strokeLinejoin="round">
      <path d="M122 105H150V820C150 980 220 1120 330 1240C440 1350 600 1425 765 1425H1470V1455L1425 1468H765C600 1468 460 1400 340 1300C200 1180 106 1000 106 820V155Z" />
      <path d="M765 105H792L808 155V750Q808 767 825 767H1420L1470 782V810H765Z" />
    </g>
    <path d="M455 35V72M455 85V765" stroke="#16e016" strokeWidth="3.5" />
    <path d="M444 728L452 744L460 728M452 744V760" stroke="#1c8c24" strokeWidth="2.5" fill="none" />
    <rect x="442" y="1052" width="26" height="28" fill="#2434c8" />
    <path d="M463 887C550 895 630 960 634 1060" fill="none" stroke="#cfcfcf" strokeWidth="6" />
    <path d="M457 830V1065" stroke="#c4c4c4" strokeWidth="11" />
    <path d="M470 1065H692" stroke="#c4c4c4" strokeWidth="8" />
    <path d="M457 765L473 830H441Z" fill="url(#gV)" />
    <path d="M692 1050L755 1065L692 1080Z" fill="url(#gV)" />
    <g fill="#d9b030" stroke="#a88418" strokeWidth="1"><circle cx="457" cy="940" r="10" /><circle cx="581" cy="940" r="10" /><circle cx="581" cy="1065" r="10" /><circle cx="457" cy="1065" r="16" /></g>
    <path d="M760 1053L780 1078M780 1053L760 1078" stroke="#d82828" strokeWidth="2.5" />
  </ModelSvg>
);

const ViewDialog = () => (
  <Dialog>
    <DialogHead>
      <svg width="16" height="16" viewBox="0 0 16 16"><circle cx="8" cy="8" r="4.5" fill="none" stroke="#fff" strokeWidth="3" /><circle cx="8" cy="8" r="6.5" fill="none" stroke="#fff" strokeWidth="2" strokeDasharray="2.6 2.5" /></svg>
      <DialogTitle>视图剖切</DialogTitle>
      <svg width="14" height="14" viewBox="0 0 14 14" style={{ marginRight: 7 }}><path d="M4 2.5A5.5 5.5 0 1 1 2 7" fill="none" stroke="#fff" strokeWidth="2" /><path d="M1 1L6 1L5 5Z" fill="#fff" /></svg>
      <svg width="12" height="16" viewBox="0 0 12 16" style={{ marginRight: 10 }}><text x="1" y="14" fontFamily="Liberation Sans" fontWeight="700" fontSize="16" fill="#fff">?</text></svg>
      <svg width="13" height="13" viewBox="0 0 13 13"><path d="M1 1L12 12M12 1L1 12" stroke="#fff" strokeWidth="2.2" /></svg>
    </DialogHead>
    <Sections>
      <Section $h={43} $p="9px 9px 0">
        <Combo $w={298} $h={25} $pl={5}>
          <ComboLead>
            <svg width="15" height="16" viewBox="0 0 15 16"><path d="M1 10V4L7 1L11 3V9L14 10V13L7 16L1 13Z" fill="#f7c53a" stroke="#b8591a" strokeWidth=".8" /><path d="M1 12L7 15L14 12V14L7 16L1 14Z" fill="#d8342a" /></svg>
            一个平面
          </ComboLead>
          <Arrow $c="#eee" />
        </Combo>
      </Section>
      <Section>
        <SecHead><OpenArrow />名称</SecHead>
        <FieldRow $h={23}>
          <FieldLabel $pl={2}>截面名</FieldLabel>
          <Combo $w={145} $pl={4}>截面 1</Combo>
        </FieldRow>
      </Section>
      <Section>
        <SecHead><OpenArrow />剖切平面</SecHead>
        <FieldRow $h={25}>
          <span>方向</span>
          <Combo $w={141} $h={25} $pl={4}>绝对坐标系<Arrow $c="#eee" /></Combo>
        </FieldRow>
        <FieldRow $h={32} $mt={8}>
          <span>平面</span>
          <PlaneIcons>
            <PlaneBtn><PlaneGlyph letter="X" /></PlaneBtn>
            <PlaneBtn><PlaneGlyph letter="Y" /></PlaneBtn>
            <PlaneBtn $on><PlaneGlyph letter="Z" /></PlaneBtn>
          </PlaneIcons>
        </FieldRow>
        <FieldRow $h={32} $mt={6}>
          <Required>指定平面</Required>
          <SquareBtn $s={24}>
            <svg width="20" height="20" viewBox="0 0 20 20"><path d="M10 2L16 6L10 10L4 6Z" fill="#eee" /><path d="M3 16H5M9 16H11M15 16H17" stroke="#eee" strokeWidth="1.6" /></svg>
          </SquareBtn>
          <OrangeSplit>
            <svg width="24" height="16" viewBox="0 0 24 16"><path d="M0 8L12 1L24 8L12 15Z" fill="#eee" stroke="#333" strokeWidth=".8" /><ellipse cx="12" cy="8" rx="7" ry="4.5" fill="#8fdcf2" stroke="#1a9ac8" /></svg>
            <OrangeLine />
            <Arrow $c="#222" />
          </OrangeSplit>
        </FieldRow>
        <FieldRow $h={24} $mt={2}>
          <span>反向</span>
          <SquareBtn $s={24}>
            <svg width="18" height="18" viewBox="0 0 18 18"><path d="M2 16L16 2M2 2L16 16M10 2H16V8M2 10V16H8" fill="none" stroke="#eee" strokeWidth="1.2" /></svg>
          </SquareBtn>
        </FieldRow>
        <FieldRow $h={32} $mt={2}>
          <span>备选平面</span>
          <SquareBtn $s={32}>
            <svg width="28" height="28" viewBox="0 0 28 28" fontFamily="Liberation Sans" fontSize="11" fill="#eee"><text x="11" y="11">3</text><text x="20" y="18">1</text><text x="3" y="25">2</text><path d="M3 14V8H8M18 5H24V9M23 18V23H15" fill="none" stroke="#eee" /></svg>
          </SquareBtn>
        </FieldRow>
      </Section>
      <Section>
        <SecHead><OpenArrow />偏置</SecHead>
        <FieldRow $h={23}>
          <SlideTrack><SlideThumb /></SlideTrack>
          <NumBox><NumClip>0.00000</NumClip></NumBox>
        </FieldRow>
        <Bound><span>-22.22</span><span>22.22</span></Bound>
        <FieldRow $h={23}>
          <span>步长</span>
          <NumBox><NumClip>1.00000</NumClip></NumBox>
        </FieldRow>
        <FieldRow $h={32} $mt={2}>
          <CheckLabel><svg width="15" height="15" viewBox="0 0 16 16"><Check /></svg>指定变换</CheckLabel>
          <SquareBtn $s={32}>
            <svg width="28" height="28" viewBox="0 0 28 28" fontFamily="Liberation Sans" fontSize="7" fontWeight="700" fill="#eee"><path d="M6 4V16" stroke="#3a70c8" /><path d="M6 16L19 9" stroke="#1f9030" /><path d="M6 16L20 24" stroke="#d02030" /><text x="9" y="8">Z</text><text x="21" y="12">Y</text><text x="21" y="26">X</text></svg>
          </SquareBtn>
        </FieldRow>
      </Section>
      {closedSections.map(s => (
        <Collapsed key={s}><ClosedArrow />{s}</Collapsed>
      ))}
    </Sections>
    <MoreRow><Arrow $up $c="#eee" /></MoreRow>
    <DialogFoot>
      <DlgBtn $ok>确定</DlgBtn>
      <DlgBtn>取消</DlgBtn>
    </DialogFoot>
  </Dialog>
);

const TreeRow = ({ r, alt }) => {
  if (r.kind === 'top') {
    return (
      <Row $alt={alt}>
        <RowMain $pl={5}>
          <Expander $plus={r.exp === 'plus'} />
          <Stub />
          {r.check && <TreeIcon viewBox="0 0 16 16"><Check /></TreeIcon>}
          {r.ball && <TreeIcon viewBox="0 0 16 16"><circle cx="8" cy="8" r="7" fill="#44dd44" stroke="#1f8f1f" /><circle cx="6" cy="6" r="2.5" fill="#c8ffc8" /></TreeIcon>}
          <TreeIcon $w={r.w || 16} viewBox={`0 0 ${r.w || 16} 16`}>{treeIcons[r.icon]}</TreeIcon>
          <RowText $ml={r.w ? 0 : 3}>{r.text}</RowText>
        </RowMain>
        <RowSide />
      </Row>
    );
  }
  return (
    <Row $alt={alt}>
      <RowMain>
        <Branch $last={r.last} />
        <TreeCheck />
        <TreeIcon $ml={2} viewBox="0 0 16 16">{treeIcons[r.icon]}</TreeIcon>
        <RowText $ml={3} $dim={r.dim} $bold={r.bold}>{r.text}</RowText>
      </RowMain>
      <RowSide>
        {r.last && <svg width="7" height="14" viewBox="0 0 7 14"><path d="M0 1H6V4H0ZM0 5.5H6V8.5H0ZM0 10H6V13H0Z" fill="#eee" /><rect x="1" y="6.3" width="3" height="1.5" fill="#ec7a10" /></svg>}
      </RowSide>
    </Row>
  );
};

export default function App() {
  return (
    <Page>
      <Global />
      <Defs />
      <Head>
        <TitleBar>
          <Logo>NX</Logo>
          <svg width="13" height="13" viewBox="0 0 13 13" style={{ marginLeft: 12, flex: 'none' }}><circle cx="6.5" cy="6.5" r="5.5" fill="none" stroke="#eee" /></svg>
          <TitleText $ml={6} $w={369}>Dream—承接正逆向设计【QQ：157-6524-487  微信：157-1182-0391 】</TitleText>
          <svg width="18" height="20" viewBox="0 0 18 20" style={{ flex: 'none' }}><path d="M13 1L17 4L5 19L1 16Z" fill="none" stroke="#eee" /><path d="M11 4L13 6M9 7L11 9M7 10L9 12M5 13L7 15" stroke="#eee" /></svg>
          <TitleText $ml={7} $w={89} $ls={-0.4}>|| Measurs ||</TitleText>
          <svg width="18" height="22" viewBox="0 0 18 22" style={{ flex: 'none' }}><circle cx="7" cy="4" r="3" fill="#ddd" /><path d="M2 15Q2 8 7 8Q12 8 12 13V15Z" fill="#ccc" /><rect x="8" y="11" width="9" height="10" fill="#fff" stroke="#111" /><path d="M10 16L12 18L15 13" stroke="#111" fill="none" /></svg>
          <TitleText $ml={17} $w={125} $ls={-0.2}>|| Class Selection ||</TitleText>
          <svg width="18" height="24" viewBox="0 0 18 24" style={{ flex: 'none' }}><rect x="2" y="1" width="14" height="13" fill="#fff" stroke="#111" /><path d="M4 5H9M4 9H11" stroke="#111" /><path d="M5 14L14 23M14 14L5 23" stroke="#fff" strokeWidth="1.5" /></svg>
          <TitleText $ml={10} $w={137} $ls={-0.2}>|| Remove Parameters ||</TitleText>
          <TitleSep />
          <svg width="18" height="20" viewBox="0 0 18 20" style={{ flex: 'none', marginLeft: 6 }}><path d="M9 1L16 7L9 19L2 7Z" fill="none" stroke="#4aa0c0" /><circle cx="9" cy="10" r="5" fill="none" stroke="#4aa0c0" /><path d="M2 10H16M9 1V19" stroke="#4aa0c0" /></svg>
          <Arrow $c="#eee" $ml={7} />
          <TitleText $ml={399} $fs={12}>NX - 建模</TitleText>
          <Siemens>SIEMENS</Siemens>
          <MinBtn />
        </TitleBar>
        <TabsBar>
          {tabs.map(t => (
            <Tab key={t.text} $w={t.w} $on={t.on} $plain={t.plain}>{t.text}</Tab>
          ))}
          <Search>
            查找命令
            <svg width="18" height="18" viewBox="0 0 18 18"><circle cx="11" cy="6" r="4.5" fill="none" stroke="#eee" strokeWidth="1.2" /><path d="M8 10L3 16" stroke="#eee" strokeWidth="2" /></svg>
          </Search>
          <HeadIcons>
            <svg width="24" height="24" viewBox="0 0 24 24"><path d="M5 1H1V5M19 1H23V5M1 19V23H5M23 19V23H19" fill="none" stroke="#eee" /></svg>
            <svg width="24" height="16" viewBox="0 0 24 16"><path d="M1 15L12 1L23 15" fill="none" stroke="#eee" strokeWidth="1.2" /></svg>
            <svg width="24" height="24" viewBox="0 0 24 24"><circle cx="12" cy="12" r="11" fill="none" stroke="#eee" /><text x="7" y="18" fontFamily="Liberation Sans" fontSize="16" fill="#eee">?</text></svg>
          </HeadIcons>
        </TabsBar>
      </Head>
      <Ribbon>
        {ribbonIcons.map((ic, i) => (
          <RibbonItem key={i}>
            <RibbonIcon viewBox="0 0 144 144">{ic}</RibbonIcon>
            <Caret $m="27px 0 0 4px" />
          </RibbonItem>
        ))}
        <Gallery>
          <GalleryBox />
          <GalleryArrows>
            <Arrow $up $c="#777" />
            <Arrow $c="#777" />
            <Arrow $c="#eee" />
          </GalleryArrows>
          <GalleryName>Dream</GalleryName>
          <GalleryArrows $p="10px 0 0"><Arrow $c="#eee" /></GalleryArrows>
        </Gallery>
      </Ribbon>
      <Toolbar>
        <MenuLines />
        <MenuText>菜单(M)</MenuText>
        <Caret />
        <VSep $m="0 10px 0 8px" />
        <Combo $w={149}>无选择过滤器<Arrow $c="#eee" /></Combo>
        <ToolIcon $ml={8} $w={25} viewBox="0 0 75 84">
          <path d="M4 6H58L38 40V60L26 68V40ZM44 54L54 64M50 58Q70 56 66 78" fill="none" stroke="#5e5e5e" strokeWidth="3" />
        </ToolIcon>
        <Combo $w={156} $ml={7}>整个装配<Arrow $c="#eee" /></Combo>
        <ToolActive>
          <svg width="24" height="26" viewBox="0 0 72 78"><path d="M6 24L36 6L66 22L36 40Z" fill="#7a7a7a" /><path d="M6 24L36 40V72L6 56Z" fill="#5c5c5c" /><path d="M36 40L66 22V54L36 72Z" fill="#6b6b6b" /></svg>
        </ToolActive>
        <ToolIcon $ml={4} viewBox="0 0 84 84" fill="none" stroke="#5e5e5e" strokeWidth="3">
          <circle cx="30" cy="24" r="14" /><path d="M30 2V46M8 24H52M46 60L64 44Q76 44 76 54L58 76Q44 76 46 60ZM56 54L68 66" />
        </ToolIcon>
        <ToolIcon $ml={6} viewBox="0 0 84 84">
          <path d="M4 4H64L40 34V58L26 48V34Z" fill="none" stroke="#eee" strokeWidth="3" />
          <rect x="34" y="34" width="44" height="46" fill="#1e1e1e" stroke="#eee" strokeWidth="3" />
          <path d="M42 44H48M42 56H48M42 68H48M54 44H70M54 56H70M54 68H70" stroke="#eee" strokeWidth="3" />
        </ToolIcon>
        <Caret $m="0 0 0 2px" />
        <ToolIcon $ml={7} viewBox="0 0 84 84" fill="none" stroke="#5e5e5e" strokeWidth="3">
          <path d="M12 4H2V58H12M54 4H64V44" /><circle cx="33" cy="30" r="13" /><path d="M33 8V52M11 30H55M50 58Q72 52 72 68Q70 82 56 80" />
        </ToolIcon>
        <ToolIcon $ml={3} viewBox="0 0 84 84" fill="none" stroke="#5e5e5e" strokeWidth="3">
          <path d="M8 24L34 6L62 22V40L36 56L8 40ZM8 24L36 40L62 22M36 40V56" /><circle cx="58" cy="56" r="13" /><path d="M58 38V76M40 56H76" />
        </ToolIcon>
        <ToolIcon $ml={3} viewBox="0 0 84 84" fill="none" stroke="#5e5e5e" strokeWidth="3">
          <path d="M4 6H50V48H4Z" /><circle cx="56" cy="52" r="13" /><path d="M56 34V72M36 52H74" />
        </ToolIcon>
        <Caret $m="0 0 0 6px" />
        <ToolIcon $ml={9} $w={25} viewBox="0 0 75 84">
          <path d="M38 2L74 22V62L38 84L2 62V22Z" fill="url(#gW)" stroke="#888" strokeWidth="1" /><path d="M2 22L38 42L74 22M38 42V84" stroke="#999" fill="none" /><path d="M34 30L70 54" stroke="#ec7a10" strokeWidth="3" />
        </ToolIcon>
        <ToolIcon $ml={7} $w={25} viewBox="0 0 75 84">
          <path d="M38 2L74 22V62L38 84L2 62V22Z" fill="url(#gW)" stroke="#888" strokeWidth="1" /><path d="M2 22L38 42V84" stroke="#999" fill="none" /><path d="M36 4L70 20V60L36 38Z" fill="none" stroke="#ec7a10" strokeWidth="3" />
        </ToolIcon>
        <VSep $m="0 0 0 11px" />
      </Toolbar>
      <Body>
        <Strip>
          {leftIcons.map((ic, i) => (
            <Cell key={i} $on={i === 4}><CellIcon viewBox="0 0 90 90">{ic}</CellIcon></Cell>
          ))}
          <StripLine />
        </Strip>
        <Center>
          <DocTabs>
            <DocTab>
              <svg width="16" height="16" viewBox="0 0 16 16"><path d="M2 11L8 1L14 8L12 13L5 15Z" fill="#ccc" /><ellipse cx="8" cy="11" rx="4" ry="2" fill="#666" /></svg>
              <span>_model1.prt</span>
              <svg width="12" height="12" viewBox="0 0 12 12" style={{ marginLeft: 3 }}><path d="M2 1H8L10 3V11H2Z" fill="none" stroke="#eee" strokeWidth="1.5" /><path d="M5 6H11" stroke="#eee" strokeWidth="1.5" /></svg>
              <svg width="10" height="10" viewBox="0 0 10 10" style={{ marginLeft: 4 }}><path d="M1 1L9 9M9 1L1 9" stroke="#7f8f95" strokeWidth="1.6" /></svg>
            </DocTab>
          </DocTabs>
          <Viewport>
            <Model />
            <ViewDialog />
          </Viewport>
        </Center>
        <Strip>
          {rightIcons.map((ic, i) => (
            <Cell key={i}><CellIcon viewBox="0 0 90 90">{ic}</CellIcon></Cell>
          ))}
          <StripLine $m="3px 0 0 1px" />
        </Strip>
        <Nav>
          <NavHead><NavBox />部件导航器</NavHead>
          <Tree $h={670}>
            <TreeHead>
              <TreeHeadCell $pl={5}>名称<Arrow $up $c="#eee" /></TreeHeadCell>
              <TreeHeadCell $pl={6}>当</TreeHeadCell>
            </TreeHead>
            {rows.map((r, i) => <TreeRow key={i} r={r} alt={i % 2 === 0} />)}
            {blankRows.map(i => (
              <Row key={i} $alt={(i + rows.length) % 2 === 0}><RowMain /><RowSide /></Row>
            ))}
          </Tree>
          <Tree>
            <Scroller><ScrollThumb /><ScrollEnd>‹</ScrollEnd><ScrollEnd>›</ScrollEnd></Scroller>
          </Tree>
          <Accordion>
            <AccRow><ClosedArrow />相关性</AccRow>
            <AccRow><ClosedArrow />细节</AccRow>
            <AccRow><ClosedArrow />预览</AccRow>
          </Accordion>
        </Nav>
      </Body>
      <Mark>
        <MarkIcon viewBox="0 0 74 84">
          <path d="M37 1L73 22V62L37 83L1 62V22Z" fill="#7fb6d6" opacity=".42" />
          <path d="M37 83L73 62V22L60 16L60 56L24 76Z" fill="#1b78ad" opacity=".75" />
          <path d="M1 22L37 1L60 16L16 32L16 60L1 62Z" fill="#a9c4d2" opacity=".3" />
          <path d="M37 20L60 34V56L37 70L14 56V34Z" fill="none" stroke="#30343a" strokeWidth="2" />
          <path d="M37 30L54 40L37 50L20 40Z" fill="#6aa0c2" /><path d="M20 40L37 50V66L20 56Z" fill="#4c88b0" /><path d="M54 40L37 50V66L54 56Z" fill="#176ea6" />
        </MarkIcon>
        <MarkName>3D世界网</MarkName>
        <MarkUrl>WWW.3DSJW.COM</MarkUrl>
      </Mark>
    </Page>
  );
}
